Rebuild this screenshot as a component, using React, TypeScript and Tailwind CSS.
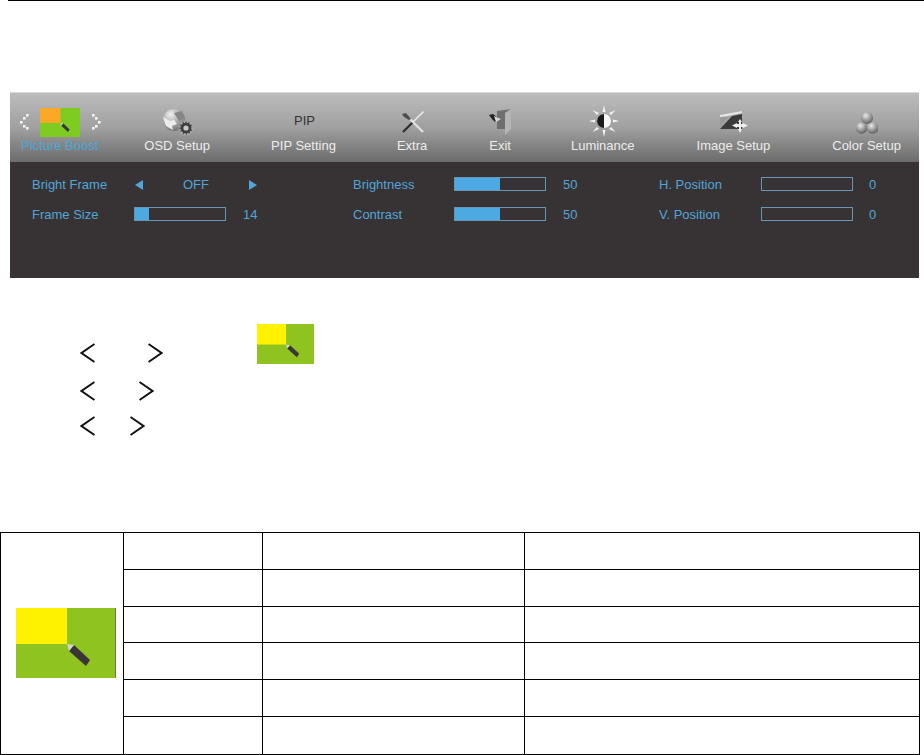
const FONT = "font-['Liberation_Sans',Arial,sans-serif]";

function Chevron({ dir, className }: { dir: "left" | "right"; className?: string }) {
  return (
    <svg width="15" height="20" viewBox="0 0 15 20" className={className}>
      <path
        d={dir === "left" ? "M14.5 1 L1.5 10 L14.5 19" : "M0.5 1 L13.5 10 L0.5 19"}
        fill="none"
        stroke="#111"
        strokeWidth="2"
      />
    </svg>
  );
}

function BoostIcon({ w, h, a, b, edge }: { w: number; h: number; a: string; b: string; edge?: boolean }) {
  return (
    <svg width={w} height={h} viewBox="0 0 100 70" preserveAspectRatio="none" className="block">
      <rect width="100" height="70" fill={b} />
      <rect width="51" height="36" fill={a} />
      <path d="M58 37 L74 52 L70 58 L53 43 Z" fill="#3a3536" />
      <path d="M51 36 L58 37 L53 43 Z" fill="#d5d5d5" />
      {edge && <rect x="99.2" width="0.8" height="70" fill="#5f6b3a" />}
    </svg>
  );
}

function DotChevron({ dir }: { dir: "left" | "right" }) {
  const pts = dir === "left" ? [[6, 0], [3, 3], [0, 7], [3, 11], [6, 13]] : [[0, 0], [3, 3], [6, 7], [3, 11], [0, 13]];
  return (
    <svg width="9" height="16" viewBox="0 0 9 16" className="shrink-0">
      {pts.map(([x, y]) => (
        <rect key={`${x}-${y}`} x={x} y={y} width="2.6" height="2.6" fill="#f4f4f4" />
      ))}
    </svg>
  );
}

function OsdIcon() {
  return (
    <svg width="32" height="27" viewBox="0 0 32 27" className="mt-[4px] shrink-0">
      <defs>
        <radialGradient id="globe" cx="0.35" cy="0.25" r="0.85">
          <stop offset="0" stopColor="#f0f0f0" />
          <stop offset="1" stopColor="#666666" />
        </radialGradient>
      </defs>
      <circle cx="12" cy="11" r="11" fill="url(#globe)" />
      <path d="M1 8 L8 12 L12 11 L15 15 L10 17 L11 21 L4 17 Z" fill="#ececec" />
      <path d="M12 4 L20 2 L23 9 L17 12 Z" fill="#858585" />
      <circle cx="24" cy="19" r="6.5" fill="#3f3f3f" stroke="#a8a8a8" strokeWidth="2.4" strokeDasharray="2 1.4" />
      <circle cx="24" cy="19" r="2.6" fill="#c8c8c8" />
    </svg>
  );
}

function ExtraIcon() {
  return (
    <svg width="22" height="22" viewBox="0 0 22 22" className="mt-[6px] shrink-0">
      <path d="M21.5 0.5 L11 11" stroke="#e8e8e8" strokeWidth="1.6" />
      <path d="M11 11 L1 21" stroke="#2b2b2b" strokeWidth="2.2" />
      <path d="M8 8 L21 21" stroke="#e2e2e2" strokeWidth="2.2" />
      <path d="M0 3 L4 2 L9 8 L7 9 L2 6 Z" fill="#4e4e4e" />
    </svg>
  );
}

function ExitIcon() {
  return (
    <svg width="22" height="26" viewBox="0 0 22 26" className="mt-[4px] shrink-0">
      <path d="M8 2 L22 0 L16 4 L16 20 L8 20 Z" fill="#6f6f6f" />
      <path d="M16 4 L22 0 L22 20 L16 26 Z" fill="#b5b5b5" />
      <path d="M0 6 L4 5 L9 9 L6 13 L3 10 Z" fill="#222222" />
      <path d="M5 7 L12 10 L7 13 Z" fill="#d8d8d8" />
    </svg>
  );
}

function SunIcon() {
  return (
    <svg width="30" height="32" viewBox="0 0 30 32" className="shrink-0">
      <path
        d="M13.5 7 L15 0 L16.5 7 Z M13.5 25 L15 32 L16.5 25 Z M6 14.5 L0 16 L6 17.5 Z M24 14.5 L30 16 L24 17.5 Z M8 10 L3.5 5 L10 8 Z M22 10 L26.5 5 L20 8 Z M8 22 L3.5 27 L10 24 Z M22 22 L26.5 27 L20 24 Z"
        fill="#f4f4f4"
      />
      <circle cx="15" cy="16" r="7" fill="#f8f8f8" />
      <path d="M15 9 A7 7 0 0 0 15 23 Z" fill="#1a1a1a" />
    </svg>
  );
}

function ImageIcon() {
  return (
    <svg width="28" height="22" viewBox="0 0 28 22" className="mt-[6px] shrink-0">
      <path d="M0 18 L12 5 L22 3 L22 18 Z" fill="#3b3b3b" />
      <path d="M0 4 L22 0 L22 2 L8 5 L0 6 Z" fill="#e4e4e4" />
      <path d="M0 6 L9 6 L0 15 Z" fill="#9a9a9a" />
      <path d="M20 8 L22 11 L21 11 L21 13 L23 13 L23 12 L28 14.5 L23 17 L23 16 L21 16 L21 18 L22 18 L20 22 L18 18 L19 18 L19 16 L17 16 L17 17 L12 14.5 L17 12 L17 13 L19 13 L19 11 L18 11 Z" fill="#ededed" />
    </svg>
  );
}

function ColorIcon() {
  return (
    <svg width="22" height="22" viewBox="0 0 22 22" className="mt-[7px] shrink-0">
      <defs>
        <radialGradient id="ball" cx="0.4" cy="0.3" r="0.8">
          <stop offset="0" stopColor="#e8e8e8" />
          <stop offset="1" stopColor="#4c4c4c" />
        </radialGradient>
      </defs>
      <circle cx="11" cy="6" r="6" fill="url(#ball)" />
      <circle cx="5.5" cy="16" r="5.8" fill="url(#ball)" />
      <circle cx="16.5" cy="16" r="5.8" fill="url(#ball)" />
    </svg>
  );
}

function Bar({ pct }: { pct: number }) {
  return (
    <div className="mb-[2px] h-[14px] w-[92px] border border-[#6796b4]">
      <div className="h-full bg-[#4ca9e2]" style={{ width: `${pct}%` }} />
    </div>
  );
}

function SettingRow({ label, value, labelW, pct, valueMl }: { label: string; value: string; labelW: string; pct: number; valueMl: string }) {
  return (
    <div className="flex h-[30px] items-center text-[13px] text-[#52a5d8]">
      <span className={labelW}>{label}</span>
      <Bar pct={pct} />
      <span className={valueMl}>{value}</span>
    </div>
  );
}

const ROWS = [36, 37, 36, 37, 37, 38];

export default function App() {
  return (
    <div className={`${FONT} h-[755px] w-[924px] overflow-hidden bg-white`}>
      <div className="ml-[8px] h-px w-[916px] bg-black" />

      <div className="ml-[10px] mt-[91px] w-[909px] bg-[#373334]">
        <div className="h-[70px] border-t border-[#d8d8d8] bg-gradient-to-b from-[#bcbcbc] via-[#a0a0a0] to-[#6c6c6c] pt-[12px]">
          <div className="flex h-[33px] items-start">
            <div className="ml-[10px] mt-[9px]">
              <DotChevron dir="left" />
            </div>
            <div className="ml-[11px] mt-[3px]">
              <BoostIcon w={40} h={29} a="#fba728" b="#7ecb22" />
            </div>
            <div className="ml-[12px] mt-[9px]">
              <DotChevron dir="right" />
            </div>
            <div className="ml-[61px]">
              <OsdIcon />
            </div>
            <div className="ml-[100px] mt-[8px] w-[22px] text-[13px] leading-[16px] text-[#333]">PIP</div>
            <div className="ml-[86px]">
              <ExtraIcon />
            </div>
            <div className="ml-[65px]">
              <ExitIcon />
            </div>
            <div className="ml-[78px]">
              <SunIcon />
            </div>
            <div className="ml-[101px]">
              <ImageIcon />
            </div>
            <div className="ml-[108px]">
              <ColorIcon />
            </div>
          </div>
          <div className="flex whitespace-nowrap text-[13px] leading-[15px] text-[#ececec]">
            <span className="ml-[11px] text-[#4ba6dc]">Picture Boost</span>
            <span className="ml-[46px]">OSD Setup</span>
            <span className="ml-[61px]">PIP Setting</span>
            <span className="ml-[61px]">Extra</span>
            <span className="ml-[62px]">Exit</span>
            <span className="ml-[60px]">Luminance</span>
            <span className="ml-[62px]">Image Setup</span>
            <span className="ml-[62px]">Color Setup</span>
          </div>
        </div>

        <div className="grid h-[116px] grid-cols-[320px_307px_1fr] pt-[8px]">
          <div className="pl-[22px]">
            <div className="flex h-[30px] items-center text-[13px] text-[#52a5d8]">
              <span className="w-[103px]">Bright Frame</span>
              <span className="w-0 border-y-[5px] border-r-[8px] border-y-transparent border-r-[#52a5d8]" />
              <span className="ml-[40px] w-[66px]">OFF</span>
              <span className="w-0 border-y-[5px] border-l-[8px] border-y-transparent border-l-[#52a5d8]" />
            </div>
            <SettingRow label="Frame Size" value="14" labelW="w-[102px]" pct={16} valueMl="ml-[17px]" />
          </div>
          <div className="pl-[23px]">
            <SettingRow label="Brightness" value="50" labelW="w-[101px]" pct={50} valueMl="ml-[17px]" />
            <SettingRow label="Contrast" value="50" labelW="w-[101px]" pct={50} valueMl="ml-[17px]" />
          </div>
          <div className="pl-[22px]">
            <SettingRow label="H. Position" value="0" labelW="w-[102px]" pct={0} valueMl="ml-[16px]" />
            <SettingRow label="V. Position" value="0" labelW="w-[102px]" pct={0} valueMl="ml-[16px]" />
          </div>
        </div>
      </div>

      <div className="ml-[80px] mt-[46px] flex h-[40px] items-end pb-px">
        <Chevron dir="left" />
        <Chevron dir="right" className="ml-[53px]" />
        <div className="mb-[-1px] ml-[94px]">
          <BoostIcon w={57} h={40} a="#fff200" b="#8fc31f" />
        </div>
      </div>
      <div className="ml-[80px] mt-[17px] flex h-[20px]">
        <Chevron dir="left" />
        <Chevron dir="right" className="ml-[44px]" />
      </div>
      <div className="ml-[80px] mt-[15px] flex h-[20px]">
        <Chevron dir="left" />
        <Chevron dir="right" className="ml-[35px]" />
      </div>

      <div className="ml-0 mt-[96px] flex w-[920px] border border-black">
        <div className="flex w-[123px] items-center justify-center border-r border-black pb-px pl-[7px]">
          <BoostIcon w={100} h={70} a="#fff200" b="#8fc31f" edge />
        </div>
        <div className="flex-1">
          {ROWS.map((h, i) => (
            <div key={i} className={`flex border-black ${i > 0 ? "border-t" : ""}`} style={{ height: h }}>
              <div className="w-[139px] border-r border-black" />
              <div className="w-[262px] border-r border-black" />
              <div className="flex-1" />
            </div>
          ))}
        </div>
      </div>
    </div>
  );
}
